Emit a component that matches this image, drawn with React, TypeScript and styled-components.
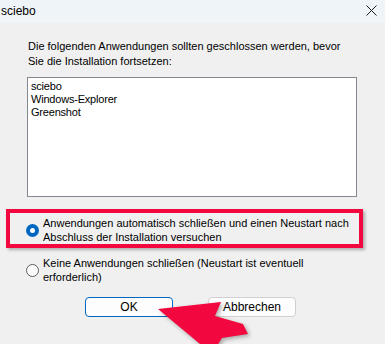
import React from 'react';
import styled, { createGlobalStyle } from 'styled-components';

const GlobalStyle = createGlobalStyle`
  html, body {
    margin: 0;
    padding: 0;
    background: #f0f0f0;
  }
  body {
    font-family: "Liberation Sans", Arial, sans-serif;
    font-size: 11px;
    color: #000;
  }
`;

const apps = ['sciebo', 'Windows-Explorer', 'Greenshot'];

interface OptionData {
  lines: string[];
  checked: boolean;
}
const options: OptionData[] = [
  {
    lines: ['Anwendungen automatisch schließen und einen Neustart nach', 'Abschluss der Installation versuchen'],
    checked: true,
  },
  {
    lines: ['Keine Anwendungen schließen (Neustart ist eventuell', 'erforderlich)'],
    checked: false,
  },
];

const App: React.FC = () => {
  return (
    <>
      <GlobalStyle />
      <Window>
        <TitleBar>
          <Title>sciebo</Title>
          <CloseButton aria-label="Schließen">
            <svg width="11" height="11" viewBox="0 0 11 11">
              <path d="M0.5 0.5 L10.5 10.5 M10.5 0.5 L0.5 10.5" stroke="#1b1b1b" strokeWidth="1" />
            </svg>
          </CloseButton>
        </TitleBar>

        <Body>
          <Intro>
            Die folgenden Anwendungen sollten geschlossen werden, bevor
            <br />
            Sie die Installation fortsetzen:
          </Intro>

          <AppList>
            {apps.map((name) => (
              <AppItem key={name}>{name}</AppItem>
            ))}
          </AppList>

          <Options>
            {options.map((opt) => (
              <Option key={opt.lines[0]} highlighted={opt.checked}>
                <Radio checked={opt.checked} />
                <OptionLabel>
                  {opt.lines[0]}
                  <br />
                  {opt.lines[1]}
                </OptionLabel>
              </Option>
            ))}
          </Options>

          <ButtonRow>
            <Button primary>OK</Button>
            <Button>Abbrechen</Button>
          </ButtonRow>
        </Body>

        <Arrow width="110" height="60" viewBox="150 295 110 60">
          <polygon
            points="158,309 221,302 215,316 243,324 248,334 222,338 212,354"
            fill="#f2073f"
          />
        </Arrow>
      </Window>
    </>
  );
};

export default App;

const Window = styled.div`
  position: relative;
  display: flex;
  flex-direction: column;
  width: 385px;
  height: 344px;
  overflow: hidden;
  background: #f0f0f0;
`;

const TitleBar = styled.div`
  display: flex;
  align-items: center;
  justify-content: space-between;
  height: 23px;
  padding-left: 1px;
  background: #eff4f9;
`;

const Title = styled.span`
  font-size: 12px;
  line-height: 23px;
  color: #000;
`;

const CloseButton = styled.div`
  display: flex;
  align-items: center;
  margin-right: 8px;
  margin-top: -2px;
`;

const Body = styled.div`
  display: flex;
  flex-direction: column;
  padding: 16px 28px 0 27px;
`;

const Intro = styled.p`
  margin: 0 0 0 1px;
  line-height: 15px;
  white-space: nowrap;
`;

const AppList = styled.div`
  display: flex;
  flex-direction: column;
  margin-top: 8px;
  width: 330px;
  height: 120px;
  box-sizing: border-box;
  padding: 2px 3px;
  background: #fff;
  border: 1px solid #828790;
`;

const AppItem = styled.div`
  line-height: 13px;
  letter-spacing: -0.2px;
`;

const Options = styled.div`
  display: flex;
  flex-direction: column;
  gap: 12px;
  margin-top: 19px;
`;

const Option = styled.div<{ highlighted?: boolean }>`
  position: relative;
  display: flex;
  align-items: center;
  gap: 4px;
  margin-left: -1px;

  &::before {
    content: '';
    display: ${(p) => (p.highlighted ? 'block' : 'none')};
    position: absolute;
    top: -7px;
    bottom: -4px;
    left: -20px;
    right: -6px;
    border: 4px solid #f2073f;
    box-shadow: 2px 2px 3px rgba(0, 0, 0, 0.28);
    pointer-events: none;
  }
`;

const Radio = styled.span<{ checked?: boolean }>`
  flex: none;
  box-sizing: border-box;
  width: 13px;
  height: 13px;
  border-radius: 50%;
  background: ${(p) => (p.checked ? '#fff' : '#fbfbfb')};
  border: ${(p) => (p.checked ? '4px solid #0067c0' : '1px solid #5f5f5f')};
`;

const OptionLabel = styled.span`
  line-height: 14px;
  white-space: nowrap;
`;

const ButtonRow = styled.div`
  display: flex;
  gap: 35px;
  margin-top: 13px;
  padding-left: 58px;
`;

const Button = styled.button<{ primary?: boolean }>`
  box-sizing: border-box;
  width: 88px;
  height: 20px;
  padding: 0;
  font-family: inherit;
  font-size: 12px;
  color: #000;
  background: #fdfdfd;
  border: 1px solid ${(p) => (p.primary ? '#0067c0' : '#d0d0d0')};
  border-radius: 4px;
`;

const Arrow = styled.svg`
  position: absolute;
  left: 150px;
  top: 295px;
  filter: drop-shadow(2px 2px 2px rgba(0, 0, 0, 0.3));
`;
